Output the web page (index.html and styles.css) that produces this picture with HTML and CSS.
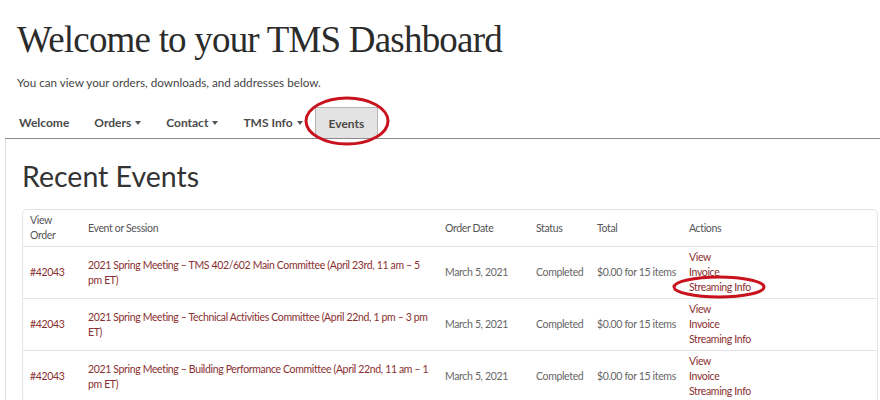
FILE: index.html
```html
<!DOCTYPE html>
<html lang="en">
<head>
  <meta charset="UTF-8">
  <title>TMS Dashboard</title>
  <link rel="stylesheet" href="styles.css">
</head>
<body>

  <div class="intro">
    <h1>Welcome to your TMS Dashboard</h1>
    <p class="lead">You can view your orders, downloads, and addresses below.</p>
  </div>

  <ul class="tabs">
    <li><a href="#">Welcome</a></li>
    <li><a href="#">Orders <span class="caret"></span></a></li>
    <li><a href="#">Contact <span class="caret"></span></a></li>
    <li><a href="#">TMS Info <span class="caret"></span></a></li>
    <li class="active">
      <a href="#">Events</a>
      <!-- highlight ring -->
      <svg class="ring ring-tab" width="88" height="50" viewBox="0 0 88 50"><ellipse cx="44" cy="25" rx="41" ry="23"/></svg>
    </li>
  </ul>

  <div class="panel">
    <h2>Recent Events</h2>

    <table class="orders">
      <colgroup>
        <col class="c-order">
        <col class="c-event">
        <col class="c-date">
        <col class="c-status">
        <col class="c-total">
        <col>
      </colgroup>
      <thead>
        <tr>
          <th>View Order</th>
          <th>Event or Session</th>
          <th>Order Date</th>
          <th>Status</th>
          <th>Total</th>
          <th>Actions</th>
        </tr>
      </thead>
      <tbody>
        <tr>
          <td><a href="#">#42043</a></td>
          <td><a href="#">2021 Spring Meeting – TMS 402/602 Main Committee (April 23rd, 11 am – 5 pm ET)</a></td>
          <td>March 5, 2021</td>
          <td>Completed</td>
          <td class="total">$0.00 for 15 items</td>
          <td class="actions">
            <a href="#">View</a>
            <a href="#">Invoice</a>
            <a href="#" class="marked">Streaming Info
              <svg class="ring ring-link" width="96" height="26" viewBox="0 0 96 26"><ellipse cx="47" cy="13" rx="45" ry="10"/></svg>
            </a>
          </td>
        </tr>
        <tr>
          <td><a href="#">#42043</a></td>
          <td><a href="#">2021 Spring Meeting – Technical Activities Committee (April 22nd, 1 pm – 3 pm ET)</a></td>
          <td>March 5, 2021</td>
          <td>Completed</td>
          <td class="total">$0.00 for 15 items</td>
          <td class="actions">
            <a href="#">View</a>
            <a href="#">Invoice</a>
            <a href="#">Streaming Info</a>
          </td>
        </tr>
        <tr>
          <td><a href="#">#42043</a></td>
          <td><a href="#">2021 Spring Meeting – Building Performance Committee (April 22nd, 11 am – 1 pm ET)</a></td>
          <td>March 5, 2021</td>
          <td>Completed</td>
          <td class="total">$0.00 for 15 items</td>
          <td class="actions">
            <a href="#">View</a>
            <a href="#">Invoice</a>
            <a href="#">Streaming Info</a>
          </td>
        </tr>
      </tbody>
    </table>
  </div>

</body>
</html>
```

FILE: styles.css
```css
* {
  margin: 0;
  padding: 0;
  box-sizing: border-box;
}

body {
  font-family: Lato, "Open Sans", sans-serif;
  background-color: #fff;
  color: #555;
  overflow: hidden;
}

a {
  color: #8a2f2f;
  text-decoration: none;
}

.intro {
  padding: 19px 17px 0;
}

h1 {
  font-family: "Liberation Serif", "DejaVu Serif", serif;
  font-weight: normal;
  font-size: 37px;
  line-height: 42px;
  letter-spacing: -0.8px;
  color: #2b2b2b;
}

.lead {
  margin-top: 14px;
  font-size: 11.7px;
  color: #444;
}

/* nav tabs */
.tabs {
  list-style: none;
  display: flex;
  margin: 18px 0 0 5px;
  border-bottom: 1px solid #8a8a8a;
}

.tabs li {
  position: relative;
}

.tabs a {
  display: flex;
  align-items: center;
  gap: 4px;
  height: 31px;
  padding: 0 12px 0 13px;
  font-size: 12px;
  font-weight: bold;
  color: #4a4a4a;
}

.tabs li:first-child a {
  padding-left: 14px;
}

.tabs .active a {
  background-color: #e3e3e3;
  border: 1px solid #b5b5b5;
  border-bottom: none;
  padding: 0 13px;
}

.caret {
  width: 0;
  height: 0;
  border-left: 3.5px solid transparent;
  border-right: 3.5px solid transparent;
  border-top: 4px solid #555;
}

/* red annotation rings */
.ring {
  position: absolute;
  pointer-events: none;
}

.ring ellipse {
  fill: none;
  stroke: #c8121e;
  stroke-width: 3;
}

.ring-tab {
  left: -12px;
  top: -11px;
}

.ring-link {
  left: -17px;
  top: -6px;
}

/* content panel */
.panel {
  margin-left: 5px;
  border-left: 1px solid #e2e2e2;
  padding: 19px 2px 0 16px;
}

h2 {
  font-size: 28.5px;
  font-weight: normal;
  line-height: 36px;
  color: #333;
}

.orders {
  width: 100%;
  margin-top: 15px;
  table-layout: fixed;
  border-collapse: separate;
  border-spacing: 0;
  border: 1px solid #e4e4e4;
  border-radius: 5px;
  font-size: 10.5px;
  line-height: 15px;
  letter-spacing: -0.35px;
}

.c-order { width: 58px; }
.c-event { width: 357px; }
.c-date { width: 91px; }
.c-status { width: 61px; }
.c-total { width: 92px; }

.orders th,
.orders td {
  text-align: left;
  vertical-align: middle;
  padding: 3px 7px;
  font-weight: normal;
}

.orders th {
  height: 36px;
  color: #555;
}

.orders td {
  height: 51px;
  border-top: 1px solid #e4e4e4;
  color: #666;
}

.orders .total {
  white-space: nowrap;
}

.actions a {
  display: block;
  width: max-content;
}

.marked {
  position: relative;
}
```
